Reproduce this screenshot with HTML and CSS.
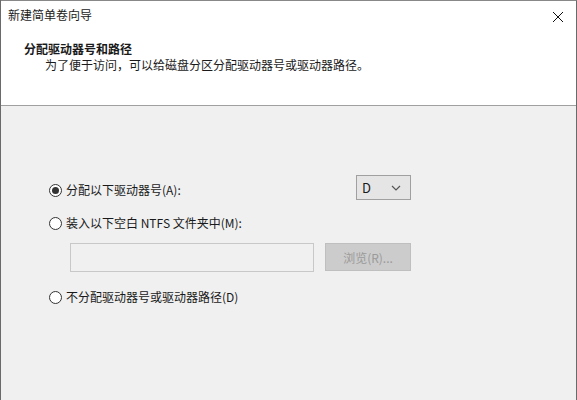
FILE: index.html
```html
<!DOCTYPE html>
<html lang="zh-CN">
<head>
<meta charset="utf-8">
<link rel="stylesheet" href="styles.css">
</head>
<body>
<div class="window">
  <div class="header">
    <div class="titlebar">
      <span class="title">新建简单卷向导</span>
      <svg class="close" width="12" height="12" viewBox="0 0 12 12"><path d="M1 1 L11 11 M11 1 L1 11" stroke="#111" stroke-width="1" fill="none"/></svg>
    </div>
    <div class="heading">分配驱动器号和路径</div>
    <div class="subheading">为了便于访问，可以给磁盘分区分配驱动器号或驱动器路径。</div>
  </div>
  <div class="body">
    <div class="row row1">
      <label class="radio"><span class="dot checked"></span>分配以下驱动器号(A):</label>
      <div class="select"><span>D</span><svg width="10" height="6" viewBox="0 0 10 6"><path d="M1 1 L5 5 L9 1" stroke="#555" stroke-width="1.2" fill="none"/></svg></div>
    </div>
    <div class="row row2">
      <label class="radio"><span class="dot"></span>装入以下空白 NTFS 文件夹中(M):</label>
    </div>
    <div class="row row3">
      <div class="textbox"></div>
      <div class="button">浏览(R)...</div>
    </div>
    <div class="row row4">
      <label class="radio"><span class="dot"></span>不分配驱动器号或驱动器路径(D)</label>
    </div>
  </div>
</div>
</body>
</html>
```
FILE: styles.css
```css
* { box-sizing: border-box; }
html, body { margin: 0; padding: 0; }
body {
  width: 577px; height: 400px; overflow: hidden;
  font-family: "Noto Sans CJK SC", "Liberation Sans", sans-serif;
  font-size: 12px; color: #1a1a1a; background: #6a6a6a;
}
.window {
  width: 576px; height: 400px;
  margin-left: 1px;
  border-top: 1px solid #888;
  border-right: 1px solid #6a6a6a;
  background: #f0f0f0;
  display: flex; flex-direction: column;
}
.header {
  background: #fff;
  height: 105px;
  border-bottom: 1px solid #a0a0a0;
  padding-left: 7px;
}
.titlebar {
  display: flex; justify-content: space-between; align-items: center;
  height: 29px; padding-right: 12px;
}
.title { font-size: 12px; line-height: 16px; margin-top: -2px; }
.close { margin-top: 2px; }
.heading {
  font-weight: bold; font-size: 12px; line-height: 16px;
  margin-top: 11px; padding-left: 16px;
}
.subheading { padding-left: 37px; margin-top: 0; line-height: 16px; }
.body { flex: 1; }
.row { display: flex; align-items: flex-start; }
.radio { display: flex; align-items: center; gap: 4px; line-height: 16px; }
.dot {
  width: 13px; height: 13px; border-radius: 50%;
  border: 1px solid #333; background: #fff;
  display: inline-flex; align-items: center; justify-content: center;
}
.dot.checked::after {
  content: ""; width: 7px; height: 7px; border-radius: 50%; background: #333;
}
.row1 { margin-top: 69px; padding-left: 48px; justify-content: space-between; width: 410px; }
.row1 .radio { margin-top: 7px; }
.select {
  width: 55px; height: 25px;
  border: 1px solid #a0a0a0; background: #e5e5e5;
  display: flex; justify-content: space-between; align-items: center;
  padding: 0 9px 0 5px; font-size: 13px;
}
.row2 { margin-top: 15px; padding-left: 48px; }
.row3 { margin-top: 12px; padding-left: 69px; gap: 11px; }
.textbox { width: 244px; height: 29px; border: 1px solid #c8c8c8; background: #f0f0f0; }
.button {
  width: 86px; height: 28px; background: #cccccc; border: 1px solid #bfbfbf;
  color: #9a9a9a; display: flex; align-items: center; justify-content: center;
}
.row4 { margin-top: 17px; padding-left: 48px; }
```
